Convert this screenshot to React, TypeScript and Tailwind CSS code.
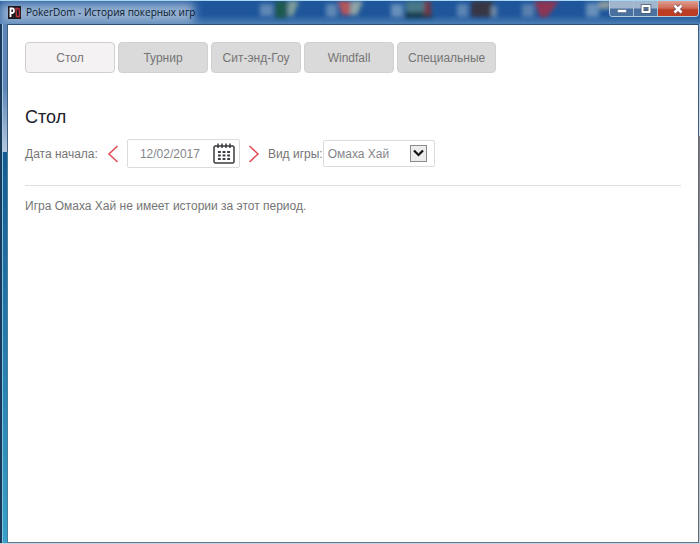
import { useState } from 'react';

const tabs = ['Стол', 'Турнир', 'Сит-энд-Гоу', 'Windfall', 'Специальные'];
const games = ['Омаха Хай', 'Холдем'];

// Desktop shortcuts showing through the glass title bar
function GlassBackdrop() {
  return (
    <svg className="absolute right-0 top-0 h-6 w-[700px]" viewBox="0 0 700 24" aria-hidden="true">
      <defs>
        <filter id="glass" x="-10%" y="-50%" width="120%" height="200%">
          <feGaussianBlur stdDeviation="2" />
        </filter>
        <filter id="glow" x="-20%" y="-100%" width="140%" height="300%">
          <feGaussianBlur stdDeviation="5" />
        </filter>
      </defs>
      <rect x="0" y="2" width="194" height="20" fill="#a9c0da" opacity="0.85" filter="url(#glow)" />
      <g filter="url(#glass)">
        <path d="M260 3h13v12h-13z" fill="#5f88b6" />
        <path d="M275 0h12v17h-12z" fill="#1c5a50" />
        <path d="M288 0h11l-6 15h-5z" fill="#7f9f9a" />
        <path d="M326 3h11v13h-11z" fill="#5f88b6" />
        <path d="M338 0h12v14h-8z" fill="#b6545a" />
        <path d="M351 0h12l-6 14h-7z" fill="#8fa5a4" />
        <path d="M391 3h12v13h-12z" fill="#6890ba" />
        <path d="M405 0h20v15h-18z" fill="#4a7889" />
        <path d="M405 11h27v6h-27z" fill="#173a4b" />
        <path d="M424 0h7v14h-7z" fill="#713b47" />
        <path d="M457 3h11v13h-11z" fill="#5c84b2" />
        <path d="M471 0h22v16h-22z" fill="#393644" />
        <path d="M491 5h6v11h-6z" fill="#6c87a5" />
        <path d="M522 3h12v13h-12z" fill="#5a80ae" />
        <path d="M534 0h25l-12 16h-7z" fill="#8e3652" />
        <path d="M586 2h13v14h-13z" fill="#6890ba" />
        <path d="M599 0h12v8h-12z" fill="#8a9c9c" />
      </g>
    </svg>
  );
}

function WindowControls() {
  return (
    <div className="relative mr-px flex h-4 overflow-hidden rounded-b border border-t-0 border-[#b7c8dc] text-white">
      <button
        type="button"
        aria-label="Свернуть"
        className="flex w-6 items-center justify-center border-r border-[#a9bdd3] bg-linear-to-b from-[#a1b5cd] from-45% to-[#48719f] to-55%"
      >
        <svg className="size-3" viewBox="0 0 12 12">
          <path d="M1.500 6.500h9v3h-9z" fill="currentColor" stroke="#4f6580" strokeWidth="0.600" />
        </svg>
      </button>
      <button
        type="button"
        aria-label="Развернуть"
        className="flex w-6 items-center justify-center border-r border-[#a9bdd3] bg-linear-to-b from-[#a1b5cd] from-45% to-[#48719f] to-55%"
      >
        <svg className="size-3" viewBox="0 0 12 12" fill="none">
          <path d="M2.500 3h7v6h-7z" stroke="#4c5870" strokeWidth="3.500" />
          <path d="M2.500 3h7v6h-7z" stroke="currentColor" strokeWidth="2" />
          <path d="M4.500 5h3v2h-3z" fill="#526d90" />
        </svg>
      </button>
      <button
        type="button"
        aria-label="Закрыть"
        className="flex w-10 items-center justify-center bg-linear-to-b from-[#dda094] from-0% via-[#cf6c58] via-45% to-[#bd3c24] to-60%"
      >
        <svg className="size-3" viewBox="0 0 12 12" fill="none">
          <path d="M2.500 2.500l7 7M9.500 2.500l-7 7" stroke="#6c4650" strokeWidth="4" />
          <path d="M2.500 2.500l7 7M9.500 2.500l-7 7" stroke="currentColor" strokeWidth="2.600" />
        </svg>
      </button>
    </div>
  );
}

function TitleBar() {
  return (
    <header className="relative flex h-6 items-start justify-between overflow-hidden border-t border-[#a8d5f2] bg-linear-to-b from-[#1f569b] from-60% to-[#4a7db2]">
      <GlassBackdrop />
      <div className="relative flex h-[22px] items-center gap-[5px] pl-2">
        <svg className="size-[13px]" viewBox="0 0 13 13" aria-hidden="true">
          <rect width="13" height="13" fill="#211b20" />
          <path d="M2.500 11V2.500H4.500Q6 2.500 6 4.500T4.500 7H3" fill="none" stroke="#fff" strokeWidth="1.800" />
          <path d="M8 2.500h1.500Q11.500 2.500 11.500 4.500V10.500H8.500Z" fill="none" stroke="#b8323c" strokeWidth="1.300" />
        </svg>
        <span className="font-['Open_Sans','Noto_Sans',sans-serif] text-[10px] leading-4 text-[#0c1a2c]">
          PokerDom - История покерных игр
        </span>
      </div>
      <WindowControls />
    </header>
  );
}

function Arrow({ label, d }: { label: string; d: string }) {
  return (
    <button type="button" aria-label={label} className="flex w-3 justify-center">
      <svg className="h-[18px] w-3 shrink-0" viewBox="0 0 12 18" fill="none" stroke="#e0505b" strokeWidth="1.600">
        <path d={d} />
      </svg>
    </button>
  );
}

function CalendarIcon() {
  return (
    <svg className="h-[21px] w-[22px]" viewBox="0 0 22 21" fill="none" stroke="#3b3b3f" strokeWidth="1.500">
      <rect x="1" y="3" width="20" height="17" rx="1.500" />
      <path d="M5 0.500v4.500M9 0.500v4.500M13 0.500v4.500M17 0.500v4.500" />
      <path d="M5 9h12M5 12.500h12M5 16h12" strokeWidth="2" strokeDasharray="2.800 1.800" />
    </svg>
  );
}

export default function App() {
  const [active, setActive] = useState('Стол');
  const [date, setDate] = useState('12/02/2017');
  const [game, setGame] = useState('Омаха Хай');

  return (
    <div className="flex min-h-screen flex-col bg-white font-['Liberation_Sans',Arial,sans-serif] text-xs leading-4 text-[#757575]">
      <TitleBar />
      <div className="flex flex-1">
        {/* Left glass edge of the window frame */}
        <div className="flex w-2 flex-col border-l-2 border-[#193a58]">
          <div className="h-32 border-x border-l-[#a8c8e4] border-r-[#3f5e80] bg-linear-to-b from-[#5d86b7] from-50% to-[#b7c9df]" />
          <div className="flex-1 border-x border-l-[#7fc6e4] border-r-[#477b9a] bg-linear-to-b from-[#175990] to-[#3aa0c8]" />
        </div>

        <main className="flex-1 border-y border-t-[#2f5179] border-b-[#64798d] px-[17px] pt-[17px]">
          <nav className="flex gap-[3px]">
            {tabs.map((tab) => (
              <button
                key={tab}
                type="button"
                onClick={() => setActive(tab)}
                className={`h-[31px] min-w-[90px] rounded border px-2.5 ${
                  tab === active ? 'border-[#d0cece] bg-[#f4f2f3]' : 'border-[#d0d0d0] bg-[#dadada]'
                }`}
              >
                {tab}
              </button>
            ))}
          </nav>

          <h1 className="mt-8 text-lg leading-6 text-[#20202a]">{active}</h1>

          <form className="mt-2.5 flex items-center border-b border-[#dfdfdf] pb-[17px]">
            <label htmlFor="start" className="mr-[9px]">Дата начала:</label>
            <Arrow label="Предыдущий день" d="M10.500 1L2 9l8.500 8" />
            <div className="mr-2 ml-2 flex h-[29px] w-[113px] items-center rounded-xs border border-[#dcdcdc] pr-1 pl-3">
              <input
                id="start"
                type="text"
                value={date}
                onChange={(e) => setDate(e.target.value)}
                className="w-full min-w-0 text-[#85858a] outline-none"
              />
              <button type="button" aria-label="Календарь">
                <CalendarIcon />
              </button>
            </div>
            <Arrow label="Следующий день" d="M1.500 1L10 9l-8.500 8" />
            <label htmlFor="game" className="ml-2">Вид игры:</label>
            <div className="relative">
              <select
                id="game"
                value={game}
                onChange={(e) => setGame(e.target.value)}
                className="h-[27px] w-28 appearance-none rounded-xs border border-[#dcdcdc] bg-white pl-1 text-[#85858a] outline-none"
              >
                {games.map((g) => (
                  <option key={g}>{g}</option>
                ))}
              </select>
              <svg className="pointer-events-none absolute top-[5px] right-2 size-[17px]" viewBox="0 0 17 17" fill="none">
                <rect x="0.500" y="0.500" width="16" height="16" fill="#ececec" stroke="#8c8c8c" />
                <path d="M4 5.500l4.500 4.500L13 5.500" stroke="#111" strokeWidth="2.200" />
              </svg>
            </div>
          </form>

          <p className="mt-3">Игра {game} не имеет истории за этот период.</p>
        </main>

        {/* Right edge */}
        <div className="flex w-0.5 flex-col">
          <div className="h-28 border-l border-[#3d5c80] bg-linear-to-b from-[#86a8cd] to-[#e2e4e8]" />
          <div className="flex-1 border-l border-[#5d6a78] bg-linear-to-b from-[#77787c] to-[#c4cdd8]" />
        </div>
      </div>
      <footer className="h-px bg-[#c3d3e2]" />
    </div>
  );
}
